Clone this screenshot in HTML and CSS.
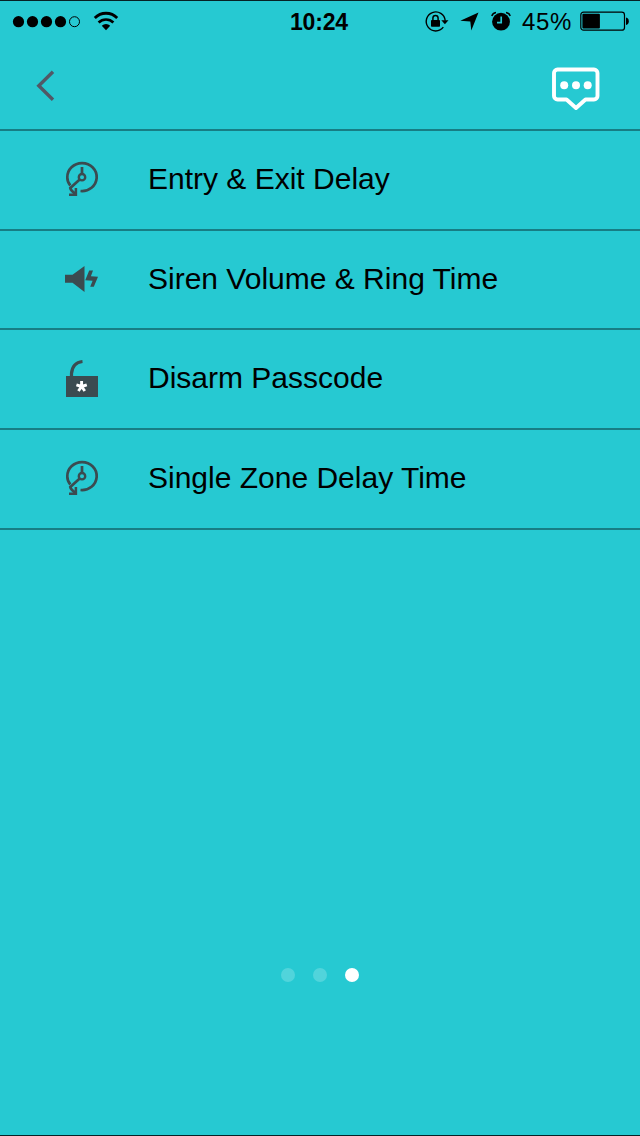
FILE: index.html
```html
<!DOCTYPE html>
<html lang="en">
<head>
  <meta charset="UTF-8">
  <title>Settings</title>
  <link rel="stylesheet" href="styles.css">
</head>
<body>

  <!-- Status bar -->
  <div class="status-bar">
    <div class="status-left">
      <svg width="108" height="40" viewBox="0 0 108 40">
        <circle cx="18.5" cy="20.7" r="5.6"/>
        <circle cx="32.5" cy="20.7" r="5.6"/>
        <circle cx="46.5" cy="20.7" r="5.6"/>
        <circle cx="60.5" cy="20.7" r="5.6"/>
        <circle cx="74.5" cy="20.7" r="5" fill="none" stroke="#000" stroke-width="1"/>
      </svg>
      <svg class="wifi" width="26" height="20" viewBox="0 0 26 20">
        <path d="M1.8 7a15.6 15.6 0 0 1 22.4 0" fill="none" stroke="#000" stroke-width="2.8"/>
        <path d="M5.6 11.5a10.6 10.6 0 0 1 14.8 0" fill="none" stroke="#000" stroke-width="2.7"/>
        <path d="M13 19.2l-4.2-4.4a6 6 0 0 1 8.4 0z"/>
      </svg>
    </div>
    <span class="time">10:24</span>
    <div class="status-right">
      <!-- orientation lock -->
      <svg width="25" height="24" viewBox="0 0 25 24">
        <path d="M19.3 18.2a9.5 9.5 0 1 1 1.9-6.5" fill="none" stroke="#000" stroke-width="1.4"/>
        <path d="M17.3 11.3h7.2l-3.600 4z"/>
        <rect x="7" y="11" width="9" height="6.7" rx=".8"/>
        <path d="M8.9 11.6V9a2.6 2.6 0 0 1 5.2 0v2.6" fill="none" stroke="#000" stroke-width="1.5"/>
      </svg>
      <!-- location -->
      <svg class="location" width="19" height="19" viewBox="0 0 19 19">
        <path d="M18.5.5L11.3 18.5l-1-9L.3 8.7z"/>
      </svg>
      <!-- alarm -->
      <svg class="alarm" width="20" height="21" viewBox="0 0 20 21">
        <circle cx="10" cy="10.7" r="8.9"/>
        <path d="M.8 5Q1.7 2 5 1.5M15 1.5Q18.3 2 19.2 5" fill="none" stroke="#000" stroke-width="1.5"/>
        <path d="M10.2 5.5v6.2H6" fill="none" stroke="#26c9d2" stroke-width="1.7"/>
      </svg>
      <span class="percent">45%</span>
      <svg class="battery" width="50" height="20" viewBox="0 0 50 20">
        <rect x=".8" y="1.2" width="43.7" height="18" rx="2.8" fill="none" stroke="#000" stroke-width="1.2"/>
        <rect x="2.4" y="2.8" width="17.5" height="14.8" rx="1"/>
        <path d="M46 6.5q2.8.6 2.8 3.700T46 13.9z"/>
      </svg>
    </div>
  </div>

  <!-- Navigation -->
  <div class="nav">
    <svg width="20" height="32" viewBox="0 0 20 32">
      <path d="M17 1.7L2.8 15.7L17 29.7" fill="none" stroke="#515866" stroke-width="3.4"/>
    </svg>
    <svg class="chat" width="50" height="46" viewBox="0 0 50 46">
      <path d="M6.5 3.5H43a3.5 3.5 0 0 1 3.5 3.5V30a3.5 3.5 0 0 1-3.5 3.5H34.5L25 42L15.5 33.5H6.5a3.5 3.5 0 0 1-3.5-3.5V7A3.5 3.5 0 0 1 6.5 3.5z" fill="none" stroke="#fff" stroke-width="3.9" stroke-linejoin="round"/>
      <circle cx="13.2" cy="19.2" r="4" fill="#fff"/>
      <circle cx="25" cy="19.2" r="4" fill="#fff"/>
      <circle cx="36.7" cy="19.2" r="4" fill="#fff"/>
    </svg>
  </div>

  <!-- Settings list -->
  <ul class="menu">
    <li>
      <svg width="36" height="36" viewBox="0 -1 36 36">
        <path d="M6.3 23.5C4 20.8 3.3 18 3.3 15.5A14.7 14 0 1 1 16.5 29" fill="none" stroke="#3b4b50" stroke-width="2.7"/>
        <path d="M18 5V12M15.7 17.5L6.3 26Q6.8 28.7 11.5 31.800" fill="none" stroke="#3b4b50" stroke-width="2.7"/>
        <path d="M5 32.8H11.9V26" fill="none" stroke="#3b4b50" stroke-width="2.5"/>
        <circle cx="18" cy="15.2" r="3.2" fill="none" stroke="#3b4b50" stroke-width="2.4"/>
      </svg>
      <span class="label">Entry &amp; Exit Delay</span>
    </li>
    <li>
      <svg width="36" height="36" viewBox="0 -1 36 36">
        <path d="M1 12.8H8.5L20.5 4V30L8.5 20.8H1z" fill="#3b4b50"/>
        <path d="M25.2 8.5H29L26.9 14.2L34 14.7L29.8 24.800H26.2L28.6 18.700L21.2 18.2z" fill="#3b4b50"/>
      </svg>
      <span class="label">Siren Volume &amp; Ring Time</span>
    </li>
    <li>
      <svg width="36" height="40" viewBox="0 0 36 40">
        <rect x="2" y="18" width="32" height="21" fill="#3b4b50"/>
        <path d="M7.5 18.5V15.5Q8.5 4.5 18.5 3.5" fill="none" stroke="#3b4b50" stroke-width="3.2"/>
        <path d="M17.6 28.5V23M17.6 28.5L22.8 26.8M17.6 28.5L20.8 33M17.6 28.5L14.4 33M17.6 28.5L12.4 26.8" fill="none" stroke="#fff" stroke-width="2.9"/>
      </svg>
      <span class="label">Disarm Passcode</span>
    </li>
    <li>
      <svg width="36" height="36" viewBox="0 -1 36 36">
        <path d="M6.3 23.5C4 20.8 3.3 18 3.3 15.5A14.7 14 0 1 1 16.5 29" fill="none" stroke="#3b4b50" stroke-width="2.7"/>
        <path d="M18 5V12M15.7 17.5L6.3 26Q6.8 28.7 11.5 31.8" fill="none" stroke="#3b4b50" stroke-width="2.7"/>
        <path d="M5 32.8H11.9V26" fill="none" stroke="#3b4b50" stroke-width="2.5"/>
        <circle cx="18" cy="15.2" r="3.2" fill="none" stroke="#3b4b50" stroke-width="2.4"/>
      </svg>
      <span class="label">Single Zone Delay Time</span>
    </li>
  </ul>

  <!-- Page dots -->
  <div class="pager">
    <span class="dot"></span>
    <span class="dot"></span>
    <span class="dot active"></span>
  </div>

</body>
</html>
```

FILE: styles.css
```css
* {
  box-sizing: border-box;
}
body {
  display: flex;
  flex-direction: column;
  height: 1136px;
  margin: 0;
  background: #26c9d2;
  border-top: 1px solid #062226;
  border-bottom: 1px solid #062226;
  color: #000;
  font-family: "Liberation Sans", Arial, sans-serif;
}
svg {
  display: block;
  flex: none;
}
.status-bar {
  display: grid;
  grid-template-columns: 290px 60px 1fr;
  height: 40px;
  line-height: 42px;
}
.status-left {
  display: flex;
}
.wifi {
  margin: 10px 0 0 -15px;
}
.time {
  font-size: 23px;
  font-weight: bold;
  letter-spacing: -0.2px;
  white-space: nowrap;
}
.status-right {
  display: flex;
  padding-left: 74px;
}
.status-right svg {
  margin-top: 8px;
}
.status-right .location {
  margin: 11px 0 0 11px;
}
.status-right .alarm {
  margin: 10px 0 0 12px;
}
.percent {
  margin-left: 11px;
  width: 50px;
  font-size: 24px;
  letter-spacing: 0.6px;
}
.status-right .battery {
  margin: 10px 0 0 8px;
}
.nav {
  display: flex;
  justify-content: space-between;
  height: 90px;
  padding: 29px 39px 0 36px;
  border-bottom: 2px solid #177d84;
}
.chat {
  margin-top: -4px;
}
.menu {
  margin: 0;
  padding: 0;
  list-style: none;
}
.menu li {
  display: flex;
  align-items: center;
  gap: 48px;
  height: 99.7px;
  padding: 0 64px 2px;
  border-bottom: 2px solid #177d84;
}
.label {
  font-size: 30px;
  line-height: 36px;
  white-space: nowrap;
}
.pager {
  display: flex;
  justify-content: center;
  gap: 18px;
  margin-top: 438px;
}
.dot {
  width: 14px;
  height: 14px;
  border-radius: 50%;
  background: #51d4db;
}
.dot.active {
  background: #fff;
}
```
